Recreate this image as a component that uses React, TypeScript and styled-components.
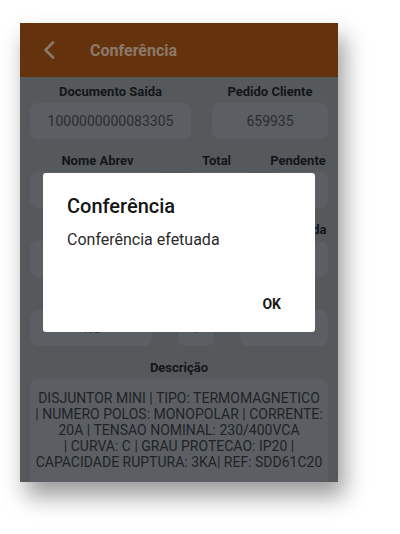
import React from 'react';
import styled, { createGlobalStyle } from 'styled-components';

const GlobalStyle = createGlobalStyle`
  html, body {
    margin: 0;
    padding: 0;
    background: #ffffff;
    font-family: Roboto, "Noto Sans", "Liberation Sans", sans-serif;
  }
`

type Field = {
  label: string;
  value?: string;
}

type FieldRow = {
  columns: string;
  fields: Field[];
}

const rows: FieldRow[] = [
  {
    columns: '161px 116px',
    fields: [
      { label: 'Documento Saída', value: '1000000000083305' },
      { label: 'Pedido Cliente', value: '659935' },
    ],
  },
  {
    columns: '135px 72px 60px',
    fields: [
      { label: 'Nome Abrev', value: 'ELETRO' },
      { label: 'Total', value: '1' },
      { label: 'Pendente', value: '0' },
    ],
  },
  {
    columns: '135px 72px 60px',
    fields: [
      { label: 'Localização', value: 'A-01' },
      { label: 'Unid', value: 'PC' },
      { label: 'Conferida', value: '1' },
    ],
  },
  {
    columns: '122px 36px 88px',
    fields: [
      { label: 'Lote', value: '1.0' },
      { label: 'Qt', value: '1' },
      { label: 'Depósito', value: '' },
    ],
  },
];

const descricao = [
  'DISJUNTOR MINI | TIPO: TERMOMAGNETICO',
  '| NUMERO POLOS: MONOPOLAR | CORRENTE:',
  '20A | TENSAO NOMINAL: 230/400VCA',
  '| CURVA: C | GRAU PROTECAO: IP20 |',
  'CAPACIDADE RUPTURA: 3KA| REF: SDD61C20',
];

const App: React.FC = () => {
  return(
    <>
    <GlobalStyle />
      <Page>
        <Phone>
          <Header>
            <BackIcon width="12" height="18" viewBox="0 0 12 18">
              <polyline points="10,1.5 2.5,9 10,16.5" />
            </BackIcon>
            <HeaderTitle>Conferência</HeaderTitle>
          </Header>
          <Content>
            {rows.map((row, i) => (
              <Row key={i} $columns={row.columns}>
                {row.fields.map((field) => (
                  <FieldBox key={field.label}>
                    <Label>{field.label}</Label>
                    <Input>{field.value}</Input>
                  </FieldBox>
                ))}
              </Row>
            ))}
            <FieldBox>
              <Label>Descrição</Label>
              <DescriptionBox>
                {descricao.map((line) => (
                  <DescriptionLine key={line}>{line}</DescriptionLine>
                ))}
              </DescriptionBox>
            </FieldBox>
          </Content>
          <Overlay>
            <Dialog>
              <DialogTitle>Conferência</DialogTitle>
              <DialogMessage>Conferência efetuada</DialogMessage>
              <DialogActions>
                <DialogButton>OK</DialogButton>
              </DialogActions>
            </Dialog>
          </Overlay>
        </Phone>
      </Page>
    </>
  );
}

export default App;

const Page = styled.div`
  width: 400px;
  height: 534px;
  padding: 23px 0 0 20px;
  box-sizing: border-box;
`

const Phone = styled.div`
  position: relative;
  width: 318px;
  height: 459px;
  overflow: hidden;
  background-color: #7a8085;
  box-shadow: 6px 14px 22px rgba(0, 0, 0, 0.4);
`

const Header = styled.div`
  display: flex;
  align-items: center;
  gap: 35px;
  height: 54px;
  padding-left: 23px;
  background-color: #904914;
`

const BackIcon = styled.svg`
  fill: none;
  stroke: #c9ad97;
  stroke-width: 2.6;
  stroke-linecap: round;
  stroke-linejoin: round;
`

const HeaderTitle = styled.div`
  color: #c9ad97;
  font-size: 16px;
  font-weight: 700;
`

const Content = styled.div`
  display: flex;
  flex-direction: column;
  gap: 13px;
  padding: 6px 10px 0;
`

const Row = styled.div<{ $columns: string }>`
  display: grid;
  grid-template-columns: ${(p) => p.$columns};
  justify-content: space-between;
`

const FieldBox = styled.div`
  display: flex;
  flex-direction: column;
  gap: 2px;
`

const Label = styled.div`
  height: 18px;
  line-height: 18px;
  text-align: center;
  font-size: 13px;
  font-weight: 700;
  color: #1c2024;
  white-space: nowrap;
`

const Input = styled.div`
  height: 36px;
  line-height: 36px;
  border-radius: 8px;
  background-color: #83898e;
  text-align: center;
  font-size: 14px;
  color: #3c4044;
`

const DescriptionBox = styled.div`
  height: 120px;
  padding-top: 11px;
  border-radius: 8px;
  background-color: #83898e;
  box-sizing: border-box;
`

const DescriptionLine = styled.div`
  height: 16px;
  line-height: 16px;
  text-align: center;
  font-size: 14px;
  color: #2e3236;
  white-space: nowrap;
`

const Overlay = styled.div`
  position: absolute;
  inset: 0;
  display: flex;
  align-items: center;
  justify-content: center;
  background-color: rgba(0, 0, 0, 0.3);
`

const Dialog = styled.div`
  width: 272px;
  height: 159px;
  padding: 21px 0 0;
  border-radius: 3px;
  background-color: #ffffff;
  box-sizing: border-box;
  display: flex;
  flex-direction: column;
`

const DialogTitle = styled.div`
  padding: 0 24px;
  height: 24px;
  line-height: 24px;
  font-size: 20px;
  font-weight: 500;
  color: #151515;
`

const DialogMessage = styled.div`
  margin-top: 12px;
  padding: 0 24px;
  height: 20px;
  line-height: 20px;
  font-size: 16px;
  color: #2b2b2b;
`

const DialogActions = styled.div`
  display: flex;
  justify-content: flex-end;
  margin-top: auto;
  padding: 0 26px 10px 0;
`

const DialogButton = styled.div`
  height: 36px;
  line-height: 36px;
  padding: 0 8px;
  font-size: 14px;
  font-weight: 700;
  color: #1a1a1a;
`
